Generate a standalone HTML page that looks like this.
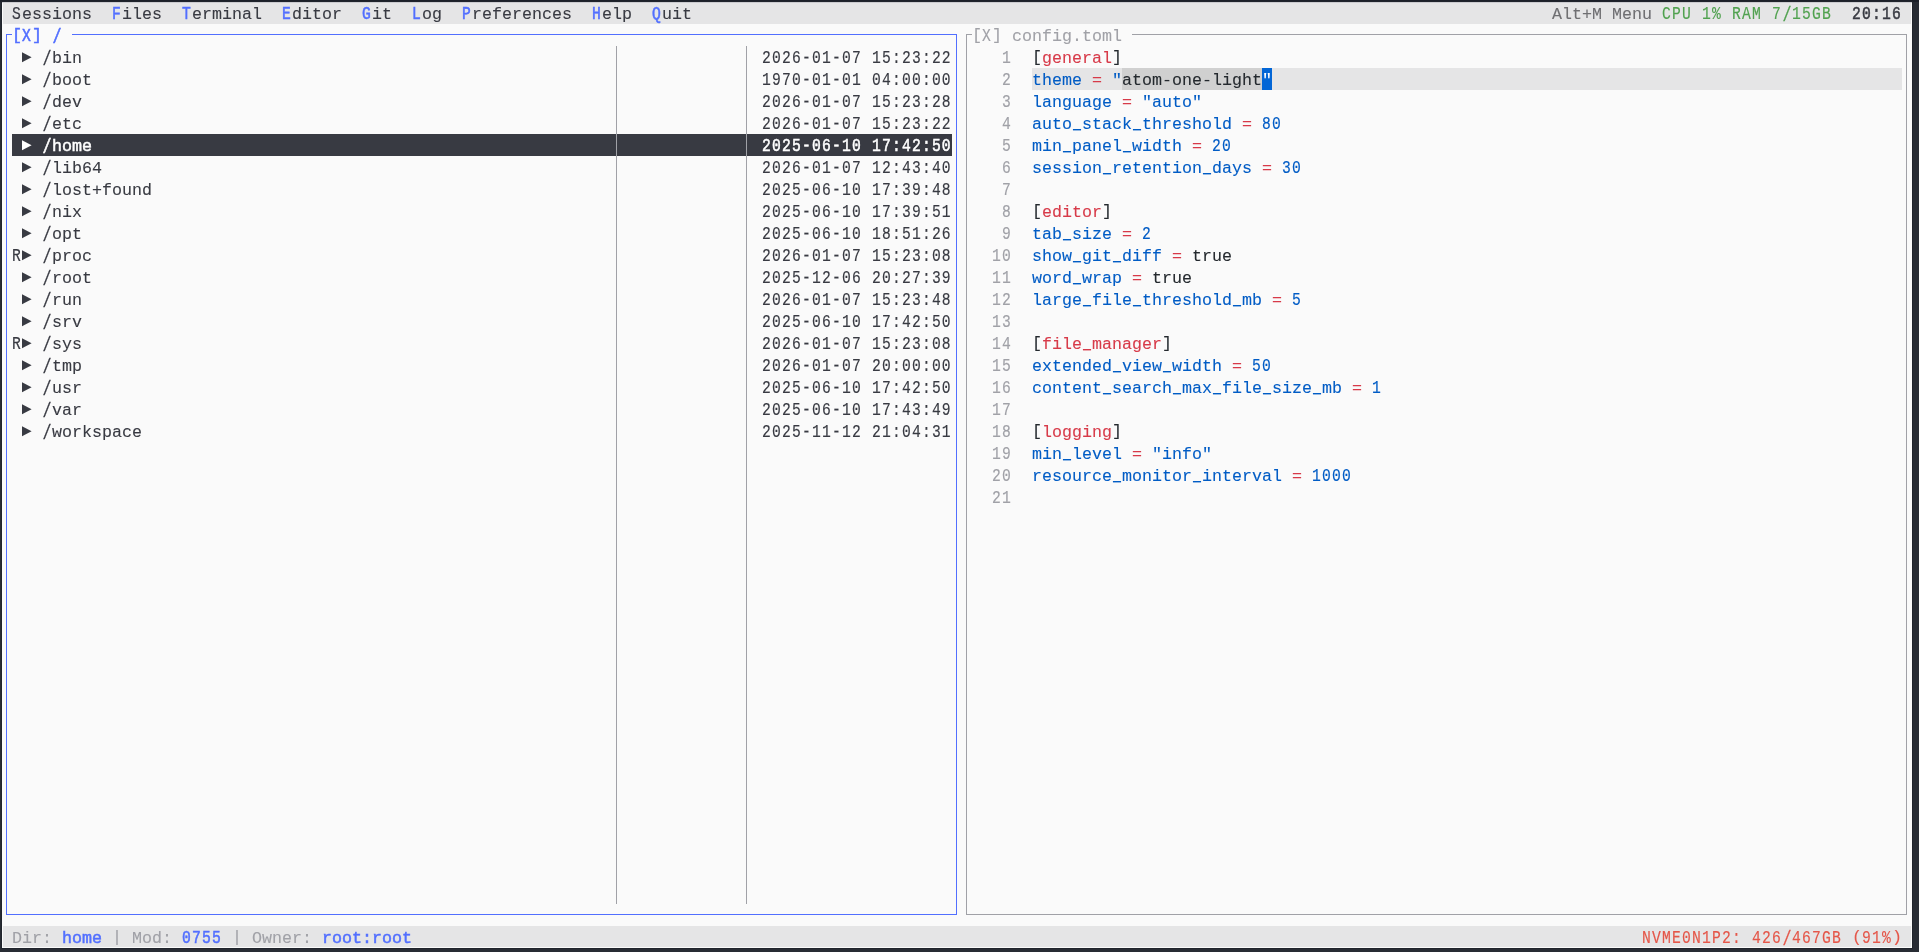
<!DOCTYPE html>
<html lang="en"><head><meta charset="utf-8"><title>terminal</title>
<style>
html,body{margin:0;padding:0;}
body{width:1919px;height:952px;overflow:hidden;background:#282c34;position:relative;}
#top{position:absolute;left:0;top:0;width:1919px;height:2px;background:#1c2029;}
#term{position:absolute;left:2px;top:2px;width:1910px;height:946px;background:#fafafa;overflow:hidden;
 font-family:"Liberation Mono",monospace;font-size:16.67px;line-height:22px;letter-spacing:-0.0036px;
 box-shadow:0 0 0 1px #20242c;}
#term i{position:absolute;display:block;}
#term .t{position:absolute;white-space:pre;height:22px;margin-top:1.5px;-webkit-text-stroke:0.1px;}
#txt{position:absolute;left:0;top:0;width:1910px;height:946px;will-change:transform;}
#term .n{transform:scale(0.88,1.07);transform-origin:0 15.5px;letter-spacing:1.3600px;-webkit-text-stroke:0.15px;}
#term .b{-webkit-text-stroke:0.5px;}
#term .br{transform:translateY(-0.4px) scale(1,0.97);transform-origin:5px 11px;}
#term .us{transform:translateY(-0.55px) scale(0.8,1.6);transform-origin:5px 16.9px;}
#term .sl{transform:scale(0.9,1.23);transform-origin:5px 8.2px;-webkit-text-stroke:0.25px;}
#term .b{-webkit-text-stroke:0.5px;}
#term .tri{position:absolute;display:block;}
</style></head>
<body><div id="top"></div><div id="term"><div id="txt">
<i style="left:1px;top:0px;width:1908px;height:22px;background:#e5e5e6"></i>
<i style="left:0px;top:0px;width:1910px;height:1px;background:#cbcbcf"></i>
<i style="left:1px;top:924px;width:1908px;height:21px;background:#e5e5e6"></i>
<span class="t n" style="left:10px;top:0px;color:#383a42;">S</span>
<span class="t" style="left:20px;top:0px;color:#383a42;">essions</span>
<span class="t b n" style="left:110px;top:0px;color:#526fff;">F</span>
<span class="t" style="left:120px;top:0px;color:#383a42;">iles</span>
<span class="t b n" style="left:180px;top:0px;color:#526fff;">T</span>
<span class="t" style="left:190px;top:0px;color:#383a42;">erminal</span>
<span class="t b n" style="left:280px;top:0px;color:#526fff;">E</span>
<span class="t" style="left:290px;top:0px;color:#383a42;">ditor</span>
<span class="t b n" style="left:360px;top:0px;color:#526fff;">G</span>
<span class="t" style="left:370px;top:0px;color:#383a42;">it</span>
<span class="t b n" style="left:410px;top:0px;color:#526fff;">L</span>
<span class="t" style="left:420px;top:0px;color:#383a42;">og</span>
<span class="t b n" style="left:460px;top:0px;color:#526fff;">P</span>
<span class="t" style="left:470px;top:0px;color:#383a42;">references</span>
<span class="t b n" style="left:590px;top:0px;color:#526fff;">H</span>
<span class="t" style="left:600px;top:0px;color:#383a42;">elp</span>
<span class="t b n" style="left:650px;top:0px;color:#526fff;">Q</span>
<span class="t" style="left:660px;top:0px;color:#383a42;">uit</span>
<span class="t" style="left:1550px;top:0px;color:#6f6f72;">Alt+M Menu</span>
<span class="t n" style="left:1660px;top:0px;color:#50a14f;">CPU 1% RAM 7</span>
<span class="t sl" style="left:1780px;top:0px;color:#50a14f;">/</span>
<span class="t n" style="left:1790px;top:0px;color:#50a14f;">15GB</span>
<span class="t b n" style="left:1850px;top:0px;color:#383a42;">20:16</span>
<i style="left:4px;top:32px;width:1px;height:881px;background:#526fff"></i>
<i style="left:954px;top:32px;width:1px;height:881px;background:#526fff"></i>
<i style="left:4px;top:912px;width:951px;height:1px;background:#526fff"></i>
<i style="left:4px;top:32px;width:6px;height:1px;background:#526fff"></i>
<i style="left:70px;top:32px;width:885px;height:1px;background:#526fff"></i>
<span class="t b br" style="left:10px;top:22px;color:#526fff;">[</span>
<span class="t b n" style="left:20px;top:22px;color:#526fff;">X</span>
<span class="t b br" style="left:30px;top:22px;color:#526fff;">]</span>
<span class="t b sl" style="left:50px;top:22px;color:#526fff;">/</span>
<i style="left:964px;top:32px;width:1px;height:881px;background:#a0a1a7"></i>
<i style="left:1904px;top:32px;width:1px;height:881px;background:#a0a1a7"></i>
<i style="left:964px;top:912px;width:941px;height:1px;background:#a0a1a7"></i>
<i style="left:964px;top:32px;width:6px;height:1px;background:#a0a1a7"></i>
<i style="left:1130px;top:32px;width:775px;height:1px;background:#a0a1a7"></i>
<span class="t br" style="left:970px;top:22px;color:#a0a1a7;">[</span>
<span class="t n" style="left:980px;top:22px;color:#a0a1a7;">X</span>
<span class="t br" style="left:990px;top:22px;color:#a0a1a7;">]</span>
<span class="t" style="left:1010px;top:22px;color:#a0a1a7;">config.toml</span>
<i style="left:614px;top:44px;width:1px;height:858px;background:#a0a1a7"></i>
<i style="left:744px;top:44px;width:1px;height:858px;background:#a0a1a7"></i>
<svg class="tri" style="left:20px;top:44px" width="10" height="22" viewBox="0 0 10 22"><path d="M0 6.2 L9.6 11.25 L0 16.3 Z" fill="#383a42"/></svg>
<span class="t sl" style="left:40px;top:44px;color:#383a42;">/</span>
<span class="t" style="left:50px;top:44px;color:#383a42;">bin</span>
<span class="t n" style="left:760px;top:44px;color:#383a42;">2026-01-07 15:23:22</span>
<svg class="tri" style="left:20px;top:66px" width="10" height="22" viewBox="0 0 10 22"><path d="M0 6.2 L9.6 11.25 L0 16.3 Z" fill="#383a42"/></svg>
<span class="t sl" style="left:40px;top:66px;color:#383a42;">/</span>
<span class="t" style="left:50px;top:66px;color:#383a42;">boot</span>
<span class="t n" style="left:760px;top:66px;color:#383a42;">1970-01-01 04:00:00</span>
<svg class="tri" style="left:20px;top:88px" width="10" height="22" viewBox="0 0 10 22"><path d="M0 6.2 L9.6 11.25 L0 16.3 Z" fill="#383a42"/></svg>
<span class="t sl" style="left:40px;top:88px;color:#383a42;">/</span>
<span class="t" style="left:50px;top:88px;color:#383a42;">dev</span>
<span class="t n" style="left:760px;top:88px;color:#383a42;">2026-01-07 15:23:28</span>
<svg class="tri" style="left:20px;top:110px" width="10" height="22" viewBox="0 0 10 22"><path d="M0 6.2 L9.6 11.25 L0 16.3 Z" fill="#383a42"/></svg>
<span class="t sl" style="left:40px;top:110px;color:#383a42;">/</span>
<span class="t" style="left:50px;top:110px;color:#383a42;">etc</span>
<span class="t n" style="left:760px;top:110px;color:#383a42;">2026-01-07 15:23:22</span>
<i style="left:10px;top:132px;width:940px;height:22px;background:#383a42"></i>
<i style="left:614px;top:132px;width:1px;height:22px;background:#a0a1a7"></i>
<i style="left:744px;top:132px;width:1px;height:22px;background:#a0a1a7"></i>
<svg class="tri" style="left:20px;top:132px" width="10" height="22" viewBox="0 0 10 22"><path d="M0 6.2 L9.6 11.25 L0 16.3 Z" fill="#ffffff"/></svg>
<span class="t b sl" style="left:40px;top:132px;color:#ffffff;">/</span>
<span class="t b" style="left:50px;top:132px;color:#ffffff;">home</span>
<span class="t b n" style="left:760px;top:132px;color:#ffffff;">2025-06-10 17:42:50</span>
<svg class="tri" style="left:20px;top:154px" width="10" height="22" viewBox="0 0 10 22"><path d="M0 6.2 L9.6 11.25 L0 16.3 Z" fill="#383a42"/></svg>
<span class="t sl" style="left:40px;top:154px;color:#383a42;">/</span>
<span class="t" style="left:50px;top:154px;color:#383a42;">lib64</span>
<span class="t n" style="left:760px;top:154px;color:#383a42;">2026-01-07 12:43:40</span>
<svg class="tri" style="left:20px;top:176px" width="10" height="22" viewBox="0 0 10 22"><path d="M0 6.2 L9.6 11.25 L0 16.3 Z" fill="#383a42"/></svg>
<span class="t sl" style="left:40px;top:176px;color:#383a42;">/</span>
<span class="t" style="left:50px;top:176px;color:#383a42;">lost+found</span>
<span class="t n" style="left:760px;top:176px;color:#383a42;">2025-06-10 17:39:48</span>
<svg class="tri" style="left:20px;top:198px" width="10" height="22" viewBox="0 0 10 22"><path d="M0 6.2 L9.6 11.25 L0 16.3 Z" fill="#383a42"/></svg>
<span class="t sl" style="left:40px;top:198px;color:#383a42;">/</span>
<span class="t" style="left:50px;top:198px;color:#383a42;">nix</span>
<span class="t n" style="left:760px;top:198px;color:#383a42;">2025-06-10 17:39:51</span>
<svg class="tri" style="left:20px;top:220px" width="10" height="22" viewBox="0 0 10 22"><path d="M0 6.2 L9.6 11.25 L0 16.3 Z" fill="#383a42"/></svg>
<span class="t sl" style="left:40px;top:220px;color:#383a42;">/</span>
<span class="t" style="left:50px;top:220px;color:#383a42;">opt</span>
<span class="t n" style="left:760px;top:220px;color:#383a42;">2025-06-10 18:51:26</span>
<span class="t n" style="left:10px;top:242px;color:#383a42;">R</span>
<svg class="tri" style="left:20px;top:242px" width="10" height="22" viewBox="0 0 10 22"><path d="M0 6.2 L9.6 11.25 L0 16.3 Z" fill="#383a42"/></svg>
<span class="t sl" style="left:40px;top:242px;color:#383a42;">/</span>
<span class="t" style="left:50px;top:242px;color:#383a42;">proc</span>
<span class="t n" style="left:760px;top:242px;color:#383a42;">2026-01-07 15:23:08</span>
<svg class="tri" style="left:20px;top:264px" width="10" height="22" viewBox="0 0 10 22"><path d="M0 6.2 L9.6 11.25 L0 16.3 Z" fill="#383a42"/></svg>
<span class="t sl" style="left:40px;top:264px;color:#383a42;">/</span>
<span class="t" style="left:50px;top:264px;color:#383a42;">root</span>
<span class="t n" style="left:760px;top:264px;color:#383a42;">2025-12-06 20:27:39</span>
<svg class="tri" style="left:20px;top:286px" width="10" height="22" viewBox="0 0 10 22"><path d="M0 6.2 L9.6 11.25 L0 16.3 Z" fill="#383a42"/></svg>
<span class="t sl" style="left:40px;top:286px;color:#383a42;">/</span>
<span class="t" style="left:50px;top:286px;color:#383a42;">run</span>
<span class="t n" style="left:760px;top:286px;color:#383a42;">2026-01-07 15:23:48</span>
<svg class="tri" style="left:20px;top:308px" width="10" height="22" viewBox="0 0 10 22"><path d="M0 6.2 L9.6 11.25 L0 16.3 Z" fill="#383a42"/></svg>
<span class="t sl" style="left:40px;top:308px;color:#383a42;">/</span>
<span class="t" style="left:50px;top:308px;color:#383a42;">srv</span>
<span class="t n" style="left:760px;top:308px;color:#383a42;">2025-06-10 17:42:50</span>
<span class="t n" style="left:10px;top:330px;color:#383a42;">R</span>
<svg class="tri" style="left:20px;top:330px" width="10" height="22" viewBox="0 0 10 22"><path d="M0 6.2 L9.6 11.25 L0 16.3 Z" fill="#383a42"/></svg>
<span class="t sl" style="left:40px;top:330px;color:#383a42;">/</span>
<span class="t" style="left:50px;top:330px;color:#383a42;">sys</span>
<span class="t n" style="left:760px;top:330px;color:#383a42;">2026-01-07 15:23:08</span>
<svg class="tri" style="left:20px;top:352px" width="10" height="22" viewBox="0 0 10 22"><path d="M0 6.2 L9.6 11.25 L0 16.3 Z" fill="#383a42"/></svg>
<span class="t sl" style="left:40px;top:352px;color:#383a42;">/</span>
<span class="t" style="left:50px;top:352px;color:#383a42;">tmp</span>
<span class="t n" style="left:760px;top:352px;color:#383a42;">2026-01-07 20:00:00</span>
<svg class="tri" style="left:20px;top:374px" width="10" height="22" viewBox="0 0 10 22"><path d="M0 6.2 L9.6 11.25 L0 16.3 Z" fill="#383a42"/></svg>
<span class="t sl" style="left:40px;top:374px;color:#383a42;">/</span>
<span class="t" style="left:50px;top:374px;color:#383a42;">usr</span>
<span class="t n" style="left:760px;top:374px;color:#383a42;">2025-06-10 17:42:50</span>
<svg class="tri" style="left:20px;top:396px" width="10" height="22" viewBox="0 0 10 22"><path d="M0 6.2 L9.6 11.25 L0 16.3 Z" fill="#383a42"/></svg>
<span class="t sl" style="left:40px;top:396px;color:#383a42;">/</span>
<span class="t" style="left:50px;top:396px;color:#383a42;">var</span>
<span class="t n" style="left:760px;top:396px;color:#383a42;">2025-06-10 17:43:49</span>
<svg class="tri" style="left:20px;top:418px" width="10" height="22" viewBox="0 0 10 22"><path d="M0 6.2 L9.6 11.25 L0 16.3 Z" fill="#383a42"/></svg>
<span class="t sl" style="left:40px;top:418px;color:#383a42;">/</span>
<span class="t" style="left:50px;top:418px;color:#383a42;">workspace</span>
<span class="t n" style="left:760px;top:418px;color:#383a42;">2025-11-12 21:04:31</span>
<span class="t n" style="left:1000px;top:44px;color:#a0a1a7;">1</span>
<span class="t br" style="left:1030px;top:44px;color:#24292e;">[</span>
<span class="t" style="left:1040px;top:44px;color:#d73a49;">general</span>
<span class="t br" style="left:1110px;top:44px;color:#24292e;">]</span>
<span class="t n" style="left:1000px;top:66px;color:#a0a1a7;">2</span>
<i style="left:1030px;top:66px;width:870px;height:22px;background:#e5e5e6"></i>
<i style="left:1120px;top:66px;width:140px;height:22px;background:#d0d0d0"></i>
<i style="left:1260px;top:66px;width:10px;height:22px;background:#0366d6"></i>
<span class="t" style="left:1030px;top:66px;color:#005cc5;">theme</span>
<span class="t" style="left:1090px;top:66px;color:#d73a49;">=</span>
<span class="t" style="left:1110px;top:66px;color:#005cc5;">"</span>
<span class="t" style="left:1120px;top:66px;color:#24292e;">atom-one-light</span>
<span class="t" style="left:1260px;top:66px;color:#ffffff;">"</span>
<span class="t n" style="left:1000px;top:88px;color:#a0a1a7;">3</span>
<span class="t" style="left:1030px;top:88px;color:#005cc5;">language</span>
<span class="t" style="left:1120px;top:88px;color:#d73a49;">=</span>
<span class="t" style="left:1140px;top:88px;color:#005cc5;">"auto"</span>
<span class="t n" style="left:1000px;top:110px;color:#a0a1a7;">4</span>
<span class="t" style="left:1030px;top:110px;color:#005cc5;">auto</span>
<span class="t us" style="left:1070px;top:110px;color:#005cc5;">_</span>
<span class="t" style="left:1080px;top:110px;color:#005cc5;">stack</span>
<span class="t us" style="left:1130px;top:110px;color:#005cc5;">_</span>
<span class="t" style="left:1140px;top:110px;color:#005cc5;">threshold</span>
<span class="t" style="left:1240px;top:110px;color:#d73a49;">=</span>
<span class="t n" style="left:1260px;top:110px;color:#005cc5;">80</span>
<span class="t n" style="left:1000px;top:132px;color:#a0a1a7;">5</span>
<span class="t" style="left:1030px;top:132px;color:#005cc5;">min</span>
<span class="t us" style="left:1060px;top:132px;color:#005cc5;">_</span>
<span class="t" style="left:1070px;top:132px;color:#005cc5;">panel</span>
<span class="t us" style="left:1120px;top:132px;color:#005cc5;">_</span>
<span class="t" style="left:1130px;top:132px;color:#005cc5;">width</span>
<span class="t" style="left:1190px;top:132px;color:#d73a49;">=</span>
<span class="t n" style="left:1210px;top:132px;color:#005cc5;">20</span>
<span class="t n" style="left:1000px;top:154px;color:#a0a1a7;">6</span>
<span class="t" style="left:1030px;top:154px;color:#005cc5;">session</span>
<span class="t us" style="left:1100px;top:154px;color:#005cc5;">_</span>
<span class="t" style="left:1110px;top:154px;color:#005cc5;">retention</span>
<span class="t us" style="left:1200px;top:154px;color:#005cc5;">_</span>
<span class="t" style="left:1210px;top:154px;color:#005cc5;">days</span>
<span class="t" style="left:1260px;top:154px;color:#d73a49;">=</span>
<span class="t n" style="left:1280px;top:154px;color:#005cc5;">30</span>
<span class="t n" style="left:1000px;top:176px;color:#a0a1a7;">7</span>
<span class="t n" style="left:1000px;top:198px;color:#a0a1a7;">8</span>
<span class="t br" style="left:1030px;top:198px;color:#24292e;">[</span>
<span class="t" style="left:1040px;top:198px;color:#d73a49;">editor</span>
<span class="t br" style="left:1100px;top:198px;color:#24292e;">]</span>
<span class="t n" style="left:1000px;top:220px;color:#a0a1a7;">9</span>
<span class="t" style="left:1030px;top:220px;color:#005cc5;">tab</span>
<span class="t us" style="left:1060px;top:220px;color:#005cc5;">_</span>
<span class="t" style="left:1070px;top:220px;color:#005cc5;">size</span>
<span class="t" style="left:1120px;top:220px;color:#d73a49;">=</span>
<span class="t n" style="left:1140px;top:220px;color:#005cc5;">2</span>
<span class="t n" style="left:990px;top:242px;color:#a0a1a7;">10</span>
<span class="t" style="left:1030px;top:242px;color:#005cc5;">show</span>
<span class="t us" style="left:1070px;top:242px;color:#005cc5;">_</span>
<span class="t" style="left:1080px;top:242px;color:#005cc5;">git</span>
<span class="t us" style="left:1110px;top:242px;color:#005cc5;">_</span>
<span class="t" style="left:1120px;top:242px;color:#005cc5;">diff</span>
<span class="t" style="left:1170px;top:242px;color:#d73a49;">=</span>
<span class="t" style="left:1190px;top:242px;color:#24292e;">true</span>
<span class="t n" style="left:990px;top:264px;color:#a0a1a7;">11</span>
<span class="t" style="left:1030px;top:264px;color:#005cc5;">word</span>
<span class="t us" style="left:1070px;top:264px;color:#005cc5;">_</span>
<span class="t" style="left:1080px;top:264px;color:#005cc5;">wrap</span>
<span class="t" style="left:1130px;top:264px;color:#d73a49;">=</span>
<span class="t" style="left:1150px;top:264px;color:#24292e;">true</span>
<span class="t n" style="left:990px;top:286px;color:#a0a1a7;">12</span>
<span class="t" style="left:1030px;top:286px;color:#005cc5;">large</span>
<span class="t us" style="left:1080px;top:286px;color:#005cc5;">_</span>
<span class="t" style="left:1090px;top:286px;color:#005cc5;">file</span>
<span class="t us" style="left:1130px;top:286px;color:#005cc5;">_</span>
<span class="t" style="left:1140px;top:286px;color:#005cc5;">threshold</span>
<span class="t us" style="left:1230px;top:286px;color:#005cc5;">_</span>
<span class="t" style="left:1240px;top:286px;color:#005cc5;">mb</span>
<span class="t" style="left:1270px;top:286px;color:#d73a49;">=</span>
<span class="t n" style="left:1290px;top:286px;color:#005cc5;">5</span>
<span class="t n" style="left:990px;top:308px;color:#a0a1a7;">13</span>
<span class="t n" style="left:990px;top:330px;color:#a0a1a7;">14</span>
<span class="t br" style="left:1030px;top:330px;color:#24292e;">[</span>
<span class="t" style="left:1040px;top:330px;color:#d73a49;">file</span>
<span class="t us" style="left:1080px;top:330px;color:#d73a49;">_</span>
<span class="t" style="left:1090px;top:330px;color:#d73a49;">manager</span>
<span class="t br" style="left:1160px;top:330px;color:#24292e;">]</span>
<span class="t n" style="left:990px;top:352px;color:#a0a1a7;">15</span>
<span class="t" style="left:1030px;top:352px;color:#005cc5;">extended</span>
<span class="t us" style="left:1110px;top:352px;color:#005cc5;">_</span>
<span class="t" style="left:1120px;top:352px;color:#005cc5;">view</span>
<span class="t us" style="left:1160px;top:352px;color:#005cc5;">_</span>
<span class="t" style="left:1170px;top:352px;color:#005cc5;">width</span>
<span class="t" style="left:1230px;top:352px;color:#d73a49;">=</span>
<span class="t n" style="left:1250px;top:352px;color:#005cc5;">50</span>
<span class="t n" style="left:990px;top:374px;color:#a0a1a7;">16</span>
<span class="t" style="left:1030px;top:374px;color:#005cc5;">content</span>
<span class="t us" style="left:1100px;top:374px;color:#005cc5;">_</span>
<span class="t" style="left:1110px;top:374px;color:#005cc5;">search</span>
<span class="t us" style="left:1170px;top:374px;color:#005cc5;">_</span>
<span class="t" style="left:1180px;top:374px;color:#005cc5;">max</span>
<span class="t us" style="left:1210px;top:374px;color:#005cc5;">_</span>
<span class="t" style="left:1220px;top:374px;color:#005cc5;">file</span>
<span class="t us" style="left:1260px;top:374px;color:#005cc5;">_</span>
<span class="t" style="left:1270px;top:374px;color:#005cc5;">size</span>
<span class="t us" style="left:1310px;top:374px;color:#005cc5;">_</span>
<span class="t" style="left:1320px;top:374px;color:#005cc5;">mb</span>
<span class="t" style="left:1350px;top:374px;color:#d73a49;">=</span>
<span class="t n" style="left:1370px;top:374px;color:#005cc5;">1</span>
<span class="t n" style="left:990px;top:396px;color:#a0a1a7;">17</span>
<span class="t n" style="left:990px;top:418px;color:#a0a1a7;">18</span>
<span class="t br" style="left:1030px;top:418px;color:#24292e;">[</span>
<span class="t" style="left:1040px;top:418px;color:#d73a49;">logging</span>
<span class="t br" style="left:1110px;top:418px;color:#24292e;">]</span>
<span class="t n" style="left:990px;top:440px;color:#a0a1a7;">19</span>
<span class="t" style="left:1030px;top:440px;color:#005cc5;">min</span>
<span class="t us" style="left:1060px;top:440px;color:#005cc5;">_</span>
<span class="t" style="left:1070px;top:440px;color:#005cc5;">level</span>
<span class="t" style="left:1130px;top:440px;color:#d73a49;">=</span>
<span class="t" style="left:1150px;top:440px;color:#005cc5;">"info"</span>
<span class="t n" style="left:990px;top:462px;color:#a0a1a7;">20</span>
<span class="t" style="left:1030px;top:462px;color:#005cc5;">resource</span>
<span class="t us" style="left:1110px;top:462px;color:#005cc5;">_</span>
<span class="t" style="left:1120px;top:462px;color:#005cc5;">monitor</span>
<span class="t us" style="left:1190px;top:462px;color:#005cc5;">_</span>
<span class="t" style="left:1200px;top:462px;color:#005cc5;">interval</span>
<span class="t" style="left:1290px;top:462px;color:#d73a49;">=</span>
<span class="t n" style="left:1310px;top:462px;color:#005cc5;">1000</span>
<span class="t n" style="left:990px;top:484px;color:#a0a1a7;">21</span>
<span class="t" style="left:10px;top:924px;color:#a0a1a7;">Dir:</span>
<span class="t b" style="left:60px;top:924px;color:#526fff;">home</span>
<span class="t br" style="left:110px;top:924px;color:#a0a1a7;">|</span>
<span class="t" style="left:130px;top:924px;color:#a0a1a7;">Mod:</span>
<span class="t b n" style="left:180px;top:924px;color:#526fff;">0755</span>
<span class="t br" style="left:230px;top:924px;color:#a0a1a7;">|</span>
<span class="t" style="left:250px;top:924px;color:#a0a1a7;">Owner:</span>
<span class="t b" style="left:320px;top:924px;color:#526fff;">root:root</span>
<span class="t n" style="left:1640px;top:924px;color:#e45649;">NVME0N1P2: 426</span>
<span class="t sl" style="left:1780px;top:924px;color:#e45649;">/</span>
<span class="t n" style="left:1790px;top:924px;color:#e45649;">467GB </span>
<span class="t br" style="left:1850px;top:924px;color:#e45649;">(</span>
<span class="t n" style="left:1860px;top:924px;color:#e45649;">91%</span>
<span class="t br" style="left:1890px;top:924px;color:#e45649;">)</span>
</div></div></body></html>
